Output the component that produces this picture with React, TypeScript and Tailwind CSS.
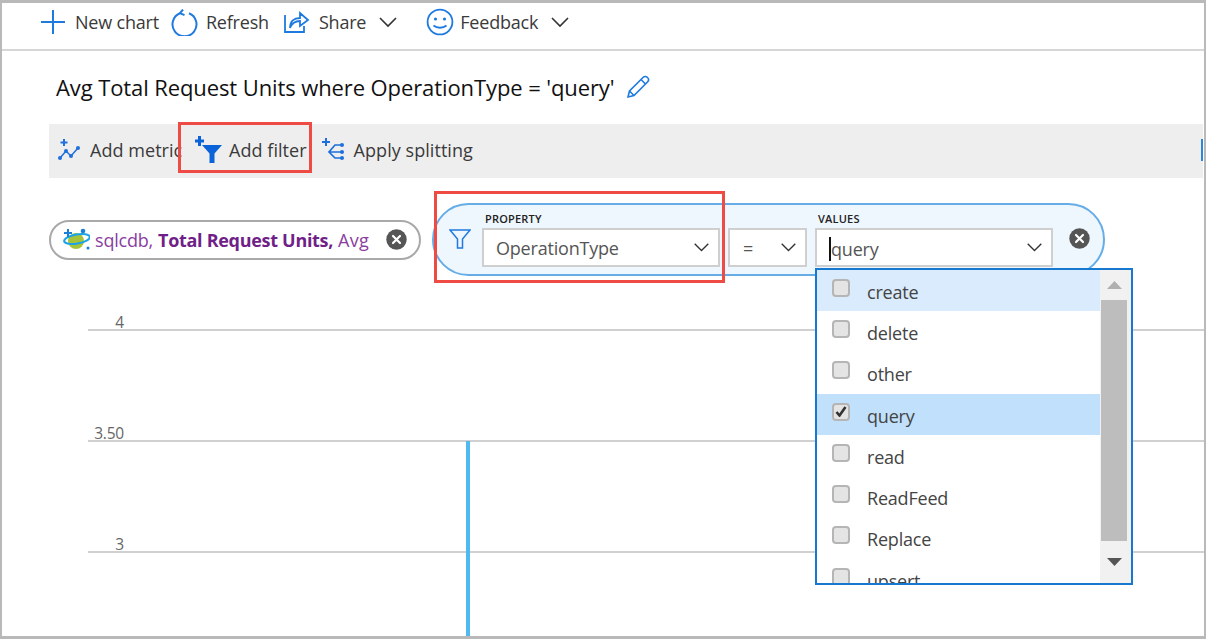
import React from "react";

const Chevron = ({ w = 20 }: { w?: number }) => (
  <svg width={w} height={w * 0.6} viewBox="0 0 20 12" fill="none" stroke="#333" strokeWidth="1.6">
    <path d="M2 2l8 8 8-8" />
  </svg>
);

const Close = () => (
  <svg width="21" height="21" viewBox="0 0 21 21">
    <circle cx="10.5" cy="10.5" r="10.2" fill="#555" />
    <path d="M7 7l7 7M14 7l-7 7" stroke="#fff" strokeWidth="2.2" strokeLinecap="round" />
  </svg>
);

const rows = [
  { t: "create", bg: "bg-[#d9ebfc]", checked: false },
  { t: "delete", bg: "bg-white", checked: false },
  { t: "other", bg: "bg-white", checked: false },
  { t: "query", bg: "bg-[#c0e0fb]", checked: true },
  { t: "read", bg: "bg-white", checked: false },
  { t: "ReadFeed", bg: "bg-white", checked: false },
  { t: "Replace", bg: "bg-white", checked: false },
  { t: "upsert", bg: "bg-white", checked: false },
];

export default function App() {
  return (
    <div
      className="relative w-[1206px] h-[639px] overflow-hidden bg-white border-t-[3px] border-l-[2px] border-r-[2px] border-b-[3px] border-[#b9b9b9] text-[#333]"
      style={{ fontFamily: '"Open Sans", sans-serif' }}
    >
      {/* command bar */}
      <div className="flex items-center h-[48px] pl-[38px] pb-[8px] border-b-2 border-[#d6d6d6] text-[18px] tracking-[-0.2px] text-[#3a3a3a]">
        <svg width="26" height="26" viewBox="0 0 26 26" fill="none" stroke="#1f7ae0" strokeWidth="2">
          <path d="M13 1v24M1 13h24" />
        </svg>
        <span className="ml-[9px]">New chart</span>
        <svg className="ml-[12px]" width="27" height="27" viewBox="0 0 27 27" fill="none" stroke="#1f7ae0" strokeWidth="2">
          <path d="M9 4.2a12 12 0 1 0 9 0" />
          <path d="M12 0.5L9 4.2l4.5 2" />
        </svg>
        <span className="ml-[8px]">Refresh</span>
        <svg className="ml-[15px]" width="26" height="24" viewBox="0 0 26 24" fill="none" stroke="#1f7ae0" strokeWidth="1.8">
          <path d="M1 5v17h19v-6" />
          <path d="M6 18c0-7 4-10 10-10V3l8 7-8 6v-5c-5 0-8 2-10 7z" />
        </svg>
        <span className="ml-[9px]">Share</span>
        <span className="ml-[12px]"><Chevron /></span>
        <svg className="ml-[28px]" width="28" height="28" viewBox="0 0 28 28" fill="none" stroke="#1f7ae0" strokeWidth="1.8">
          <circle cx="14" cy="14" r="12.4" />
          <circle cx="9.5" cy="11" r="1.6" fill="#1f7ae0" stroke="none" />
          <circle cx="18.5" cy="11" r="1.6" fill="#1f7ae0" stroke="none" />
          <path d="M7.5 17.5c3.5 3 9.5 3 13 0" />
        </svg>
        <span className="ml-[6px]">Feedback</span>
        <span className="ml-[12px]"><Chevron /></span>
      </div>

      {/* title */}
      <div className="flex items-center h-[73px] pl-[54px] text-[22px] font-medium tracking-[-0.1px] text-[#111] whitespace-nowrap">
        <span>Avg Total Request Units where OperationType = 'query'</span>
        <svg className="ml-[11px] -mt-[2px]" width="24" height="24" viewBox="0 0 24 24" fill="none" stroke="#1f7ae0" strokeWidth="1.6">
          <path d="M2 22l1.5-6L17 2.5a2.6 2.6 0 0 1 4.5 4.5L8 20.5z" />
          <path d="M15 4.5l4.5 4.5M3.5 16L8 20.5" />
        </svg>
      </div>

      {/* metric toolbar */}
      <div className="relative flex items-center h-[54px] ml-[47px] mr-px pb-[2px] bg-[#eeeeee] text-[18px] tracking-[0.05px] text-[#3a3a3a]">
        <svg className="ml-[8px]" width="24" height="24" viewBox="0 0 24 24" fill="none" stroke="#1f6fdc" strokeWidth="1.5">
          <path d="M7 1v7M3.5 4.5h7" strokeWidth="2" />
          <path d="M3 20l6-7 5 5 7-8" />
          <circle cx="3" cy="20" r="2" fill="#1f6fdc" stroke="none" />
          <circle cx="9" cy="13" r="2" fill="#1f6fdc" stroke="none" />
          <circle cx="14" cy="18" r="2" fill="#1f6fdc" stroke="none" />
          <circle cx="21" cy="10" r="2" fill="#1f6fdc" stroke="none" />
        </svg>
        <span className="ml-[9px] w-[92px] overflow-hidden whitespace-nowrap">Add metric</span>
        <svg className="ml-[13px]" width="27" height="28" viewBox="0 0 27 28">
          <path d="M4.5 0v10M0 5h9" stroke="#0b63d9" strokeWidth="3" />
          <path d="M7 9h20l-7.500 8.500V27h-5v-9.500z" fill="#0b63d9" />
        </svg>
        <span className="ml-[7px]">Add filter</span>
        <svg className="ml-[14px]" width="24" height="26" viewBox="0 0 24 26" fill="none" stroke="#1f6fdc" strokeWidth="1.7">
          <path d="M5 1v8M1 5h8" strokeWidth="2" />
          <path d="M21 8h-7l-6 7 6 6h7M8 15h13" />
          <circle cx="21" cy="8" r="2" fill="#1f6fdc" stroke="none" />
          <circle cx="21" cy="15" r="2" fill="#1f6fdc" stroke="none" />
          <circle cx="21" cy="21" r="2" fill="#1f6fdc" stroke="none" />
        </svg>
        <span className="ml-[9px]">Apply splitting</span>
        <div className="absolute right-0 top-[15px] w-[2px] h-[22px] bg-[#2b88d8]" />
      </div>

      {/* pills */}
      <div className="flex items-center mt-[25px] ml-[47px] h-[73px]">
        <div className="flex items-center w-[372px] h-[40px] rounded-full border-2 border-[#a9a9a9] pl-[12px] text-[18px] text-[#8a3da0] whitespace-nowrap">
          <svg width="27" height="24" viewBox="0 0 27 24">
            <circle cx="13" cy="13" r="8" fill="#a5c43a" />
            <ellipse cx="14" cy="11" rx="13" ry="4.5" fill="none" stroke="#1aa3e8" strokeWidth="2" transform="rotate(-10 14 11)" />
            <path d="M5 1v8M1 5h8" stroke="#1a7fd8" strokeWidth="2" />
            <circle cx="20" cy="3" r="2.300" fill="#1a7fd8" />
            <circle cx="25" cy="20" r="1.500" fill="#1a7fd8" />
          </svg>
          <span className="ml-[5px] pt-[2px] tracking-[-0.2px]">sqlcdb,</span>
          <span className="ml-[5px] pt-[2px] font-bold text-[#701f88] tracking-[-0.3px]">Total Request Units,</span>
          <span className="ml-[5px] pt-[2px] tracking-[0.3px]">Avg</span>
          <span className="ml-auto mr-[12px] flex"><Close /></span>
        </div>

        <div className="relative flex items-center w-[673px] h-[73px] ml-[11px] rounded-full border-2 border-[#66ade8] bg-[#eef6fe] pl-[15px]">
          <svg width="22" height="20" viewBox="0 0 22 20" fill="none" stroke="#1f7ae0" strokeWidth="1.5" className="mt-[-1px]">
            <path d="M1 1h20l-7.500 9v9h-5v-9z" />
          </svg>
          <div className="ml-[11px] w-[238px]">
            <div className="mb-[2px] text-[11px] font-semibold leading-[14px] tracking-[0.2px] text-[#222] pl-[3px]">PROPERTY</div>
            <div className="flex items-center justify-between h-[39px] bg-white border-2 border-[#cfcfcf] pl-[12px] pr-[8px] text-[18px] tracking-[-0.2px] text-[#555]">
              <span className="pt-[2px]">OperationType</span>
              <Chevron w={17} />
            </div>
          </div>
          <div className="ml-[8px] w-[79px] pt-[16px]">
            <div className="flex items-center justify-between h-[39px] bg-white border-2 border-[#cfcfcf] pl-[13px] pr-[8px] text-[18px] text-[#555]">
              <span className="pt-[2px]">=</span>
              <Chevron w={17} />
            </div>
          </div>
          <div className="ml-[8px] w-[238px]">
            <div className="mb-[2px] text-[11px] font-semibold leading-[14px] tracking-[0.2px] text-[#222] pl-[3px]">VALUES</div>
            <div className="flex items-center justify-between h-[39px] bg-white border-2 border-[#cfcfcf] pl-[12px] pr-[8px] text-[18px] tracking-[-0.2px] text-[#555]">
              <span className="border-l-2 border-[#111] leading-[24px] mt-[2px]">query</span>
              <Chevron w={17} />
            </div>
          </div>
          <span className="ml-[16px] -mt-[2px] flex"><Close /></span>

          {/* dropdown */}
          <div className="absolute left-[381px] top-[63px] z-10 w-[318px] h-[317px] bg-white border-2 border-[#1678cf] flex overflow-hidden">
            <div className="flex-1 overflow-hidden">
              {rows.map((r) => (
                <div key={r.t} className={`flex items-center shrink-0 h-[41.3px] pl-[15px] ${r.bg}`}>
                  <span className="relative -mt-[6px] flex items-center justify-center w-[18px] h-[18px] rounded-[4px] bg-[#e4e4e4] border-2 border-[#b5b5b5]">
                    {r.checked && (
                      <svg width="12" height="11" viewBox="0 0 12 11" fill="none" stroke="#333" strokeWidth="2.600">
                        <path d="M1.500 6l3 3.500L10.500 1" />
                      </svg>
                    )}
                  </span>
                  <span className="ml-[17px] pt-[3px] text-[18px] tracking-[-0.2px] text-[#444]">{r.t}</span>
                </div>
              ))}
            </div>
            <div className="flex flex-col w-[31px] bg-[#f1f1f1] pr-[3px]">
              <div className="flex items-center justify-center h-[30px]">
                <svg width="15" height="8" viewBox="0 0 15 8"><path d="M7.500 0L15 8H0z" fill="#b0b0b0" /></svg>
              </div>
              <div className="mx-[1px] h-[241px] bg-[#bdbdbd]" />
              <div className="flex flex-1 items-center justify-center pb-[1px]">
                <svg width="15" height="8" viewBox="0 0 15 8"><path d="M7.500 8L15 0H0z" fill="#555" /></svg>
              </div>
            </div>
          </div>
        </div>
      </div>

      {/* chart */}
      <div className="relative ml-[86px] -mt-[56px] text-[15.5px] text-[#666]">
        {["4", "3.50", "3", ""].map((l, i) => (
          <div key={i} className="flex items-end h-[111px] border-b-2 border-[#d0d0d0]">
            <span className="w-[36px] text-right leading-[20px] tracking-[-0.2px] -mb-[3px]">{l}</span>
          </div>
        ))}
        <div className="absolute left-[378px] top-[221px] w-[4px] h-[200px] bg-[#4fb9f0]" />
      </div>

      {/* annotations */}
      <div className="absolute left-[176px] top-[119px] w-[134px] h-[51px] border-[3px] border-[#ee4b45]" />
      <div className="absolute left-[432px] top-[188px] w-[291px] h-[92px] border-[3px] border-[#ee4b45]" />
    </div>
  );
}
